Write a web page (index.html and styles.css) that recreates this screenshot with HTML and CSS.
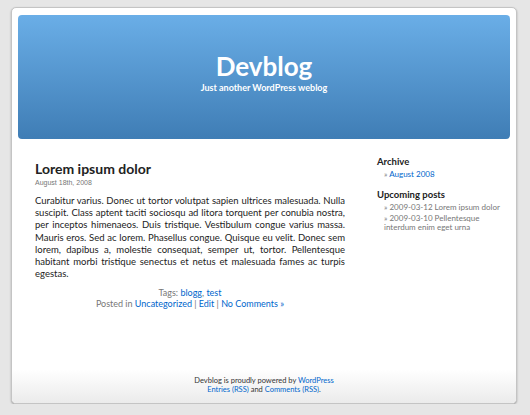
FILE: index.html
```html
<!DOCTYPE html>
<html lang="en">
<head>
<meta charset="utf-8">
<title>Devblog</title>
<link rel="stylesheet" href="styles.css">
</head>
<body>
<div class="page">
  <header class="header">
    <h1 class="site-title">Devblog</h1>
    <div class="tagline">Just another WordPress weblog</div>
  </header>
  <div class="main">
    <article class="content">
      <h2 class="post-title">Lorem ipsum dolor</h2>
      <div class="post-date">August 18th, 2008</div>
      <p class="post-body">Curabitur varius. Donec ut tortor volutpat sapien ultrices malesuada. Nulla suscipit. Class aptent taciti sociosqu ad litora torquent per conubia nostra, per inceptos himenaeos. Duis tristique. Vestibulum congue varius massa. Mauris eros. Sed ac lorem. Phasellus congue. Quisque eu velit. Donec sem lorem, dapibus a, molestie consequat, semper ut, tortor. Pellentesque habitant morbi tristique senectus et netus et malesuada fames ac turpis egestas.</p>
      <div class="post-meta">
        <div>Tags: <a href="#">blogg</a>, <a href="#">test</a></div>
        <div>Posted in <a href="#">Uncategorized</a> | <a href="#">Edit</a> | <a href="#">No Comments »</a></div>
      </div>
    </article>
    <aside class="sidebar">
      <h3 class="widget-title">Archive</h3>
      <ul class="widget-list">
        <li>» <a href="#">August 2008</a></li>
      </ul>
      <h3 class="widget-title widget-title-2">Upcoming posts</h3>
      <ul class="widget-list upcoming">
        <li>» 2009-03-12 Lorem ipsum dolor</li>
        <li>» 2009-03-10 Pellentesque interdum enim eget urna</li>
      </ul>
    </aside>
  </div>
  <footer class="footer">
    <div>Devblog is proudly powered by <a href="#">WordPress</a></div>
    <div><a href="#">Entries (RSS)</a> and <a href="#">Comments (RSS)</a>.</div>
  </footer>
</div>
</body>
</html>
```

FILE: styles.css
```css
html, body {
  margin: 0;
  padding: 0;
}
body {
  background: #e6e6e6;
  font-family: Lato, "Open Sans", sans-serif;
  color: #333;
  padding-top: 7px;
}
a {
  color: #0066cc;
  text-decoration: none;
}
.page {
  box-sizing: border-box;
  margin-left: 11px;
  width: 506px;
  height: 397px;
  background: #fff;
  border: 1px solid #c4c4c4;
  border-radius: 5px;
  box-shadow: 0 1px 2px rgba(0,0,0,0.3);
  display: flex;
  flex-direction: column;
  overflow: hidden;
}
.header {
  margin: 7px 6px 0 6px;
  height: 124px;
  flex: none;
  border-radius: 4px;
  background: linear-gradient(#6aaee7, #3f7db5);
  color: #fff;
  text-align: center;
  padding-top: 37px;
  box-sizing: border-box;
}
.site-title {
  margin: 0;
  font-size: 26px;
  line-height: 28px;
  font-weight: 700;
}
.tagline {
  margin-top: 2px;
  font-size: 9px;
  line-height: 11px;
  font-weight: 700;
}
.main {
  flex: 1;
  display: flex;
}
.content {
  width: 310px;
  padding-left: 23px;
  padding-top: 22px;
}
.post-title {
  margin: 0;
  font-size: 14px;
  line-height: 15px;
  font-weight: 700;
  color: #222;
}
.post-date {
  margin-top: 2px;
  font-family: "Liberation Sans", Arial, sans-serif;
  font-size: 7px;
  line-height: 10px;
  color: #777;
}
.post-body {
  margin: 7px 0 0 0;
  font-size: 9.5px;
  line-height: 12.2px;
  text-align: justify;
  color: #222;
}
.post-meta {
  margin-top: 8px;
  text-align: center;
  font-size: 9px;
  line-height: 10.5px;
  color: #777;
}
.sidebar {
  margin-left: 32px;
  width: 125px;
  padding-top: 17px;
}
.widget-title {
  margin: 0;
  font-size: 9.5px;
  line-height: 12px;
  font-weight: 700;
  color: #222;
}
.widget-title-2 {
  margin-top: 9px;
}
.widget-list {
  list-style: none;
  margin: 2px 0 0 0;
  padding: 0 0 0 7px;
  font-size: 8px;
  line-height: 9.5px;
  color: #777;
}
.widget-list li + li {
  margin-top: 1.5px;
}
.footer {
  height: 34px;
  flex: none;
  box-sizing: border-box;
  padding-top: 8px;
  text-align: center;
  font-size: 7.5px;
  line-height: 8.5px;
  color: #333;
  background: linear-gradient(#ffffff, #ebebeb);
}
```
